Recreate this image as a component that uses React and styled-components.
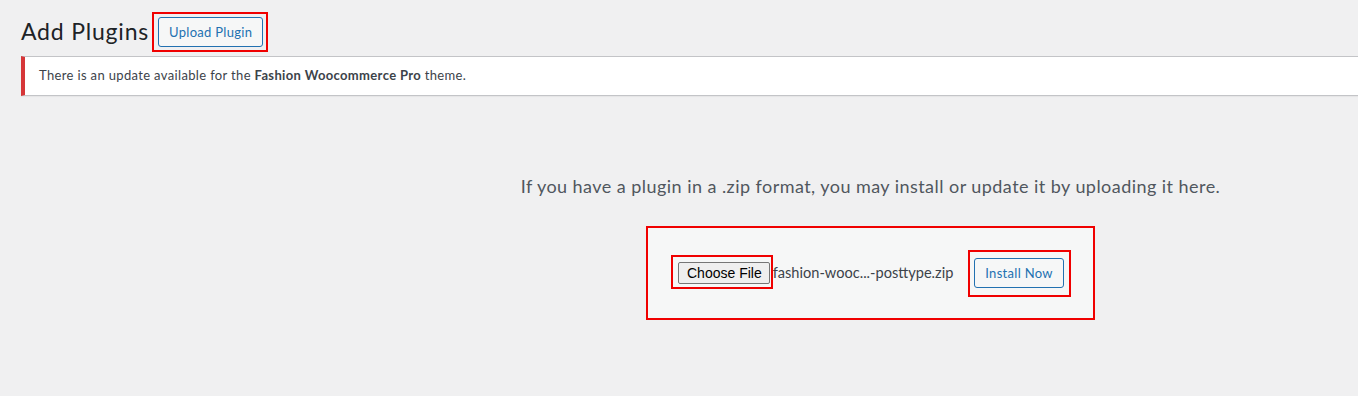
import React from 'react'
import styled, { createGlobalStyle } from 'styled-components'

const GlobalStyle = createGlobalStyle`
  body {
    margin: 0;
    background: #f0f0f1;
    font-family: Lato, "Open Sans", sans-serif;
    color: #3c434a;
  }
`

export default function App() {
  return (
    <>
      <GlobalStyle />
      <Wrap>
        <HeaderRow>
          <Title>Add Plugins</Title>
          <Marked $t={5} $r={5} $b={5} $l={6}>
            <OutlineButton>Upload Plugin</OutlineButton>
          </Marked>
        </HeaderRow>
        <Notice>
          <p>
            There is an update available for the <strong>Fashion Woocommerce Pro</strong> theme.
          </p>
        </Notice>
        <UploadArea>
          <Help>If you have a plugin in a .zip format, you may install or update it by uploading it here.</Help>
          <UploadForm>
            <FileField>
              <Marked $t={7} $r={3} $b={5} $l={7}>
                <FileButton>Choose File</FileButton>
              </Marked>
              <FileName>fashion-wooc...-posttype.zip</FileName>
            </FileField>
            <Marked $t={8} $r={7} $b={9} $l={6}>
              <OutlineButton $w={90}>Install Now</OutlineButton>
            </Marked>
          </UploadForm>
        </UploadArea>
      </Wrap>
    </>
  )
}

const Wrap = styled.div`
  padding: 12px 0 0 21px;
`

const HeaderRow = styled.div`
  display: flex;
  align-items: center;
  gap: 9px;
  height: 40px;
`

const Title = styled.h1`
  margin: 0;
  font-size: 23px;
  font-weight: 400;
  line-height: 1.3;
  letter-spacing: 0.8px;
  color: #1d2327;
`

// red annotation frame drawn over an element
const Marked = styled.span`
  position: relative;
  display: inline-flex;

  &::after {
    content: '';
    position: absolute;
    top: -${p => p.$t}px;
    right: -${p => p.$r}px;
    bottom: -${p => p.$b}px;
    left: -${p => p.$l}px;
    border: 2px solid #f00000;
    pointer-events: none;
  }
`

const OutlineButton = styled.button`
  box-sizing: border-box;
  height: 30px;
  ${p => p.$w && `width: ${p.$w}px;`}
  padding: 0 10px;
  border: 1px solid #2271b1;
  border-radius: 3px;
  background: #f6f7f7;
  color: #2271b1;
  font-family: Lato, "Open Sans", sans-serif;
  font-size: 13px;
  letter-spacing: 0.3px;
  cursor: pointer;
`

const Notice = styled.div`
  margin-top: 4px;
  background: #fff;
  border: 1px solid #c3c4c7;
  border-left: 4px solid #d63638;
  border-right: 0;
  box-shadow: 0 1px 1px rgba(0, 0, 0, 0.04);
  padding: 1px 12px 1px 14px;

  p {
    margin: 8px 0;
    font-size: 13px;
    line-height: 1.5;
    letter-spacing: 0.35px;
    color: #3c434a;
  }

  strong {
    font-weight: 700;
    color: #3c434a;
  }
`

const UploadArea = styled.div`
  padding-left: 362px;
  text-align: center;
`

const Help = styled.p`
  margin: 0;
  padding-top: 77px;
  font-size: 18px;
  line-height: 1.5;
  letter-spacing: 0.45px;
  color: #50575e;
`

const UploadForm = styled.div`
  display: flex;
  align-items: center;
  width: fit-content;
  margin: 26px auto 0;
  padding: 30px 29px 30px 30px;
  background: #f6f7f7;
  border: 2px solid #f00000;
`

const FileField = styled.div`
  display: flex;
  align-items: center;
  width: 296px;
`

const FileButton = styled.button`
  box-sizing: border-box;
  height: 22px;
  padding: 1px 7px 1px 8px;
  border: 1px solid #767676;
  border-radius: 2px;
  background: #efefef;
  color: #000;
  font-family: "Liberation Sans", Arial, sans-serif;
  font-size: 14px;
`

const FileName = styled.span`
  margin-left: 3px;
  font-size: 14.6px;
  color: #3c434a;
  white-space: nowrap;
`
